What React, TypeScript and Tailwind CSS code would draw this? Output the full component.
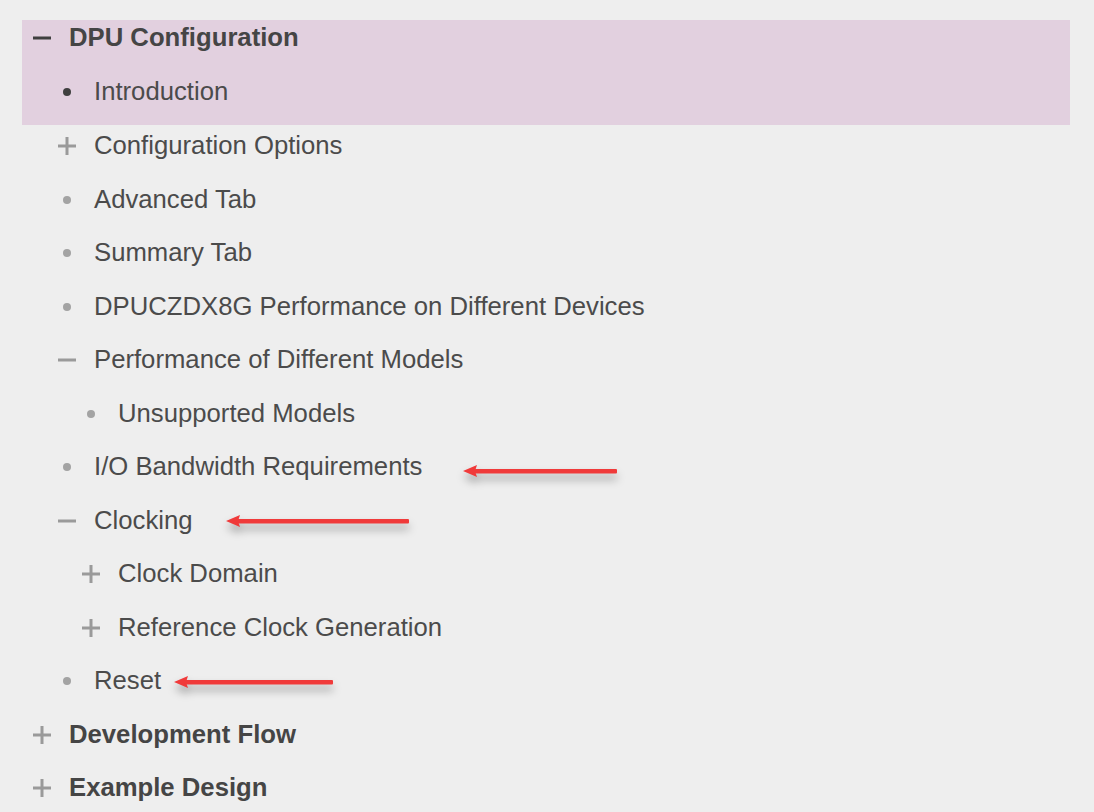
import { type ReactNode } from "react";

type Marker = "minus" | "plus" | "dot" | "dotDark" | "minusDark";

interface TocItem {
  label: string;
  level: 1 | 2 | 3;
  marker: Marker;
  bold?: boolean;
  arrow?: { gap: number; length: number; dy: number };
}

const items: TocItem[] = [
  { label: "Configuration Options", level: 2, marker: "plus" },
  { label: "Advanced Tab", level: 2, marker: "dot" },
  { label: "Summary Tab", level: 2, marker: "dot" },
  { label: "DPUCZDX8G Performance on Different Devices", level: 2, marker: "dot" },
  { label: "Performance of Different Models", level: 2, marker: "minus" },
  { label: "Unsupported Models", level: 3, marker: "dot" },
  { label: "I/O Bandwidth Requirements", level: 2, marker: "dot", arrow: { gap: 41, length: 154, dy: 4 } },
  { label: "Clocking", level: 2, marker: "minus", arrow: { gap: 33, length: 183, dy: 0 } },
  { label: "Clock Domain", level: 3, marker: "plus" },
  { label: "Reference Clock Generation", level: 3, marker: "plus" },
  { label: "Reset", level: 2, marker: "dot", arrow: { gap: 13, length: 159, dy: 1 } },
  { label: "Development Flow", level: 1, marker: "plus", bold: true },
  { label: "Example Design", level: 1, marker: "plus", bold: true },
];

function MarkerIcon({ marker }: { marker: Marker }) {
  if (marker === "dot" || marker === "dotDark") {
    return (
      <span
        className={`block h-[8px] w-[8px] rounded-full ${marker === "dot" ? "bg-[#a3a3a3]" : "bg-[#3f3f3f]"}`}
      />
    );
  }
  const color = marker === "minusDark" ? "#3f3f3f" : "#9a9a9a";
  return (
    <svg width="20" height="20" viewBox="0 0 20 20" aria-hidden="true">
      <rect x="1" y="8.5" width="18" height="3" fill={color} />
      {marker === "plus" && <rect x="8.5" y="1" width="3" height="18" fill={color} />}
    </svg>
  );
}

function Arrow({ length }: { length: number }) {
  return (
    <svg
      width={length}
      height="14"
      viewBox={`0 0 ${length} 14`}
      className="drop-shadow-[0_6px_4px_rgba(0,0,0,0.32)]"
      aria-hidden="true"
    >
      <polygon points="0,7 14,1 12,7 14,13" fill="#f03a3a" />
      <rect x="10" y="5" width={length - 10} height="4.5" rx="1" fill="#f03a3a" />
    </svg>
  );
}

const levelPad: Record<number, string> = {
  1: "pl-[10px]",
  2: "pl-[35px]",
  3: "pl-[59px]",
};

function Row({ item, className = "h-[53.5px]" }: { item: TocItem; className?: string }) {
  const text: ReactNode = (
    <span className={item.bold ? "font-bold text-[#454545]" : "text-[#4b4b4b]"}>{item.label}</span>
  );
  return (
    <div className={`flex items-center gap-[17px] ${levelPad[item.level]} ${className}`}>
      <span className="flex w-[20px] shrink-0 items-center justify-center">
        <MarkerIcon marker={item.marker} />
      </span>
      <div className="flex items-center">
        {text}
        {item.arrow && (
          <span
            className="flex"
            style={{ marginLeft: item.arrow.gap, marginTop: item.arrow.dy * 2 }}
          >
            <Arrow length={item.arrow.length} />
          </span>
        )}
      </div>
    </div>
  );
}

export default function App() {
  return (
    <div className="min-h-screen w-full bg-[#eeeeee] pt-[20px] pl-[22px] pr-[24px] font-['Liberation_Sans',Arial,sans-serif] text-[25.7px] leading-none">
      <div className="h-[105px] bg-[#e2d0df]">
        <Row
          item={{ label: "DPU Configuration", level: 1, marker: "minusDark", bold: true }}
          className="h-[36px]"
        />
        <Row
          item={{ label: "Introduction", level: 2, marker: "dotDark" }}
          className="mt-[18px] h-[36px]"
        />
      </div>
      <div className="-mt-[5.5px]">
        {items.map((item) => (
          <Row key={item.label} item={item} />
        ))}
      </div>
    </div>
  );
}
